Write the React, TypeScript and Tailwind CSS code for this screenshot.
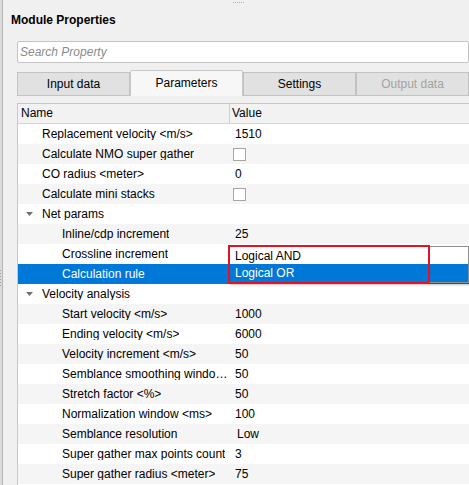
import React from "react";

type Row = {
  name: string;
  value?: string;
  check?: boolean;
  level: 0 | 1;
  group?: boolean;
  selected?: boolean;
  indentValue?: boolean;
};

const ROWS: Row[] = [
  { name: "Replacement velocity <m/s>", value: "1510", level: 0 },
  { name: "Calculate NMO super gather", check: true, level: 0 },
  { name: "CO radius <meter>", value: "0", level: 0 },
  { name: "Calculate mini stacks", check: true, level: 0 },
  { name: "Net params", level: 0, group: true },
  { name: "Inline/cdp increment", value: "25", level: 1 },
  { name: "Crossline increment", value: "", level: 1 },
  { name: "Calculation rule", value: "", level: 1, selected: true },
  { name: "Velocity analysis", level: 0, group: true },
  { name: "Start velocity <m/s>", value: "1000", level: 1 },
  { name: "Ending velocity <m/s>", value: "6000", level: 1 },
  { name: "Velocity increment <m/s>", value: "50", level: 1 },
  { name: "Semblance smoothing window <ms>", value: "50", level: 1 },
  { name: "Stretch factor <%>", value: "50", level: 1 },
  { name: "Normalization window <ms>", value: "100", level: 1 },
  { name: "Semblance resolution", value: "Low", level: 1, indentValue: true },
  { name: "Super gather max points count", value: "3", level: 1 },
  { name: "Super gather radius <meter>", value: "75", level: 1 },
];

const TABS = [
  { label: "Input data", active: false, disabled: false },
  { label: "Parameters", active: true, disabled: false },
  { label: "Settings", active: false, disabled: false },
  { label: "Output data", active: false, disabled: true },
];

function Arrow() {
  return (
    <svg width="7" height="4" viewBox="0 0 7 4" className="shrink-0">
      <path d="M0 0 L7 0 L3.5 4 Z" fill="#6f6f6f" />
    </svg>
  );
}

function PropRow({ row, index }: { row: Row; index: number }) {
  const bg = row.selected ? "bg-[#0078d7]" : index % 2 === 1 ? "bg-[#f5f5f5]" : "bg-white";
  const text = row.selected ? "text-white" : "text-black";
  return (
    <div className={`flex h-[20px] items-center ${bg} ${text}`}>
      <div className="flex w-[212px] shrink-0 items-center overflow-hidden pr-[2px]">
        {row.group ? (
          <div className="flex min-w-0 items-center">
            <div className="ml-[8px] mr-[9px] flex items-center">
              <Arrow />
            </div>
            <span className="truncate">{row.name}</span>
          </div>
        ) : (
          <span className={`min-w-0 truncate ${row.level === 1 ? "pl-[44px]" : "pl-[24px]"}`}>{row.name}</span>
        )}
      </div>
      <div className="flex flex-1 items-center pl-[5px]">
        {row.check ? (
          <div className="ml-[-2px] h-[13px] w-[13px] border border-[#a6a6a6] bg-white" />
        ) : (
          <span className={row.indentValue ? "pl-[2px]" : ""}>{row.value}</span>
        )}
      </div>
    </div>
  );
}

export default function App() {
  return (
    <div
      className="relative flex h-[485px] w-[469px] overflow-hidden bg-[#f0f0f0] text-[12px] leading-none"
      style={{ fontFamily: '"Segoe UI", "Liberation Sans", Arial, sans-serif' }}
    >
      {/* left splitter edge */}
      <div className="relative w-[3px] shrink-0 border-r border-[#b4b4b4] bg-[#dcdcdc]">
        <div className="absolute left-[0px] top-[270px] flex flex-col gap-[2px]">
          {[0, 1, 2, 3, 4, 5].map((i) => (
            <div key={i} className="h-[1px] w-[1px] bg-[#9a9a9a]" />
          ))}
        </div>
      </div>

      <div className="flex min-w-0 flex-1 flex-col">
        {/* top splitter dots */}
        <div className="flex h-[3px] justify-center pt-[2px]">
          <div className="flex gap-[1px] pl-[4px]">
            {[0, 1, 2, 3, 4, 5].map((i) => (
              <div key={i} className="h-[1px] w-[1px] bg-[#b0b0b0]" />
            ))}
          </div>
        </div>

        <div className="pl-[8px] pt-[11px] text-[12px] font-bold text-black">Module Properties</div>

        <div className="ml-[14px] mt-[15px] flex h-[22px] items-center rounded-[2px] border border-[#c4c4c4] bg-white pl-[2px]">
          <span className="italic text-[#8a8a8a]">Search Property</span>
        </div>

        {/* tabs */}
        <div className="ml-[14px] mt-[7px] flex h-[26px] items-end">
          {TABS.map((t) =>
            t.active ? (
              <div
                key={t.label}
                className="flex h-[26px] w-[113px] items-center justify-center rounded-t-[2px] border border-b-0 border-[#c8c8c8] bg-[#f7f7f7] pb-[2px] text-black"
              >
                {t.label}
              </div>
            ) : (
              <div
                key={t.label}
                className={`flex h-[24px] w-[113px] items-center justify-center border border-[#c2c2c2] bg-[#e1e1e1] ${
                  t.disabled ? "text-[#a3a3a3]" : "text-black"
                }`}
              >
                {t.label}
              </div>
            )
          )}
        </div>

        {/* table */}
        <div className="ml-[14px] mt-[7px] flex-1 border-l border-t border-[#c8c8c8] bg-white">
          <div className="flex h-[20px] items-center border-b border-[#d5d5d5] bg-[#f2f2f2] text-black">
            <div className="w-[212px] shrink-0 border-r border-[#d0d0d0] pl-[3px] leading-[19px]">Name</div>
            <div className="flex-1 pl-[2px] leading-[19px]">Value</div>
          </div>
          {ROWS.map((r, i) => (
            <PropRow key={r.name} row={r} index={i} />
          ))}
        </div>
      </div>

      {/* dropdown popup */}
      <div className="absolute left-[229px] top-[246px] w-[240px] border border-[#8e8e8e] bg-white shadow-[1px_2px_2px_rgba(0,0,0,0.25)]">
        <div className="flex h-[17px] items-center pl-[5px] text-black">Logical AND</div>
        <div className="flex h-[18px] items-center bg-[#0078d7] pl-[5px] text-white">Logical OR</div>
      </div>

      {/* annotation */}
      <div className="pointer-events-none absolute left-[228px] top-[245px] h-[39px] w-[202px] border-[2px] border-[#e81123]" />
    </div>
  );
}
